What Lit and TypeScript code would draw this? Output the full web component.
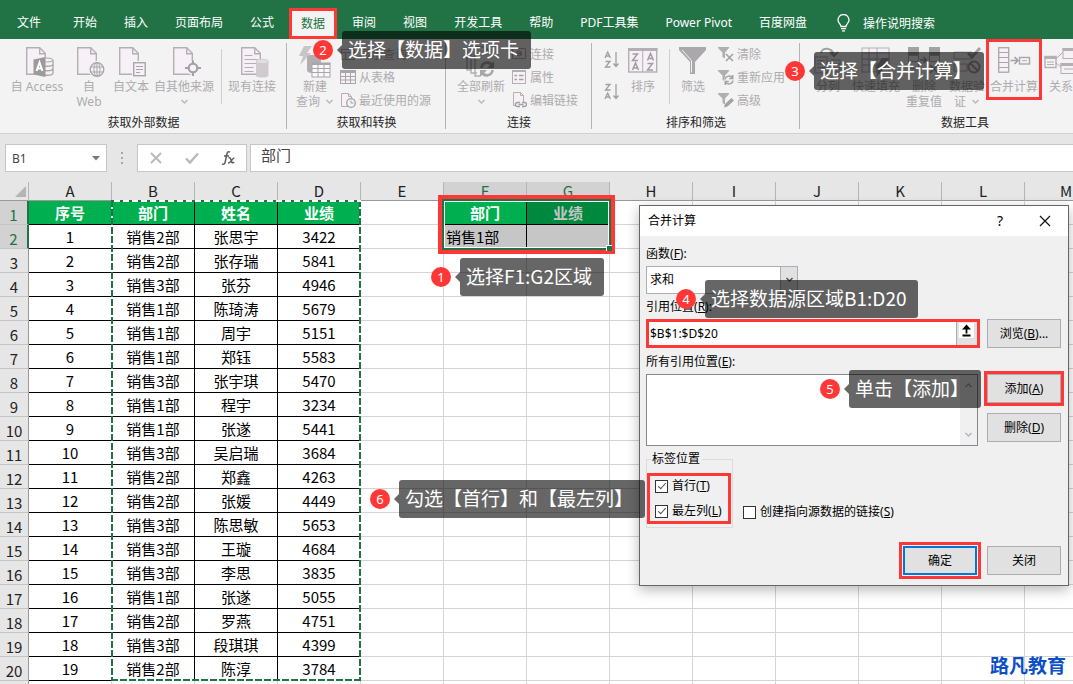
import { LitElement, html, svg, css, nothing, TemplateResult, SVGTemplateResult } from "lit";
import { customElement, property } from "lit/decorators.js";
import { classMap } from "lit/directives/class-map.js";

/* ---------- icons ---------- */

const wrap = (w: number, h: number, body: SVGTemplateResult) =>
  html`<svg width=${w} height=${h} viewBox="0 0 ${w} ${h}" fill="none" stroke="#b3afb3" aria-hidden="true">${body}</svg>`;

const sheet = svg`<path fill="#f7f0f7" stroke-width="1.4" d="M3.7 1.7h13l5.6 5.6v21H3.7z"/><path stroke-width="1.4" d="M16.7 1.7v6h5.6"/>`;
const smallSheet = svg`<path fill="#f7f0f7" d="M1.5 1.5h7l3 3v10h-10z"/><path d="M8.5 1.5v3h3"/>`;
const smallFunnel = svg`<path fill="#b0aeb0" stroke="none" d="M0 1h11v1L7 6.500v6L4.500 11V6.500L0 2z"/>`;

const icons: Record<string, TemplateResult> = {
  access: wrap(34, 32, svg`<g transform="translate(3 0)">${sheet}
    <rect x="17" y="11" width="14" height="20" fill="#f3f3f3" stroke="none"/>
    <path fill="#f7f0f7" stroke="#a8a6a8" stroke-width="1.300" d="M17 14v13c0 3 13 3 13 0V14M17 18c0 3 13 3 13 0M17 22.500c0 3 13 3 13 0"/><ellipse cx="23.500" cy="14" rx="6.500" ry="2" fill="#f7f0f7" stroke="#a8a6a8"/>
    <path fill="#9c9a9c" stroke="none" d="M10.500 13.500l12-2.500v20l-12-2.500z"/><path stroke="#fff" stroke-width="2" d="M13.500 25l3-8.500 3 8.500M14.500 22.500h4"/></g>`),
  web: wrap(34, 32, svg`<g transform="translate(2 0)">${sheet}<circle cx="23" cy="23.500" r="8.500" fill="#f3f3f3" stroke="none"/>
    <circle cx="23" cy="23.500" r="6.800" fill="#f7f0f7" stroke="#a8a6a8" stroke-width="1.300"/><ellipse cx="23" cy="23.500" rx="3" ry="6.800" stroke="#a8a6a8"/><path stroke="#a8a6a8" d="M16.500 21h13M16.500 26h13M23 17v13.500"/></g>`),
  text: wrap(34, 32, svg`<g transform="translate(2 0)">${sheet}<rect x="16" y="15" width="14" height="16" fill="#f3f3f3" stroke="none"/>
    <rect x="17.700" y="16.700" width="11.500" height="13" fill="#f7f0f7" stroke="#a8a6a8" stroke-width="1.400"/><path stroke="#a8a6a8" d="M20 20.500h7M20 23.500h7M20 26.500h4"/></g>`),
  other: wrap(34, 32, svg`<g transform="translate(3 0)">${sheet}<circle cx="23" cy="22" r="7" fill="#f3f3f3" stroke="none"/>
    <circle cx="23" cy="22" r="4.300" fill="#f7f0f7" stroke="#a3a1a3" stroke-width="2.200"/><path stroke="#a3a1a3" stroke-width="2" d="M23 14.500v3.500M23 26v4M15 22h3.500M27 22h4"/></g>`),
  existing: wrap(34, 32, svg`<g transform="translate(3 0)">${sheet}<path d="M6.500 9.500h8M6.500 13.500h13M6.500 17.500h13M6.500 21.500h9M6.500 25.500h9"/>
    <path fill="#cfcbcf" stroke="none" d="M18 15.500v14c0 2.700 12.500 2.700 12.500 0v-14z"/><ellipse cx="24.300" cy="15.500" rx="6.200" ry="2.200" fill="#e2dee2" stroke="#cfcbcf"/></g>`),
  newQuery: wrap(34, 32, svg`<path fill="#c8c4c8" stroke="none" d="M6 0h8l-5 7h4L2 19l3-9H1z"/><path fill="#b0aeb0" stroke="none" d="M9 12c0-2 1-3 3-3h11v9h-9v9c-3 0-5-1-5-3z"/>
    <rect x="14" y="17" width="18" height="14" fill="#fbf7fb" stroke="#a8a6a8"/><path stroke="#a8a6a8" stroke-width="2" d="M14 18h18"/><path stroke="#a8a6a8" d="M14 22.500h18M14 26.500h18M20 18v13M26 18v13"/>`),
  refreshAll: wrap(34, 32, svg`<path stroke-width="1.400" d="M3 2v22h5M7 2v25h6M11 1h10l5 5M11 1v29h5"/><circle cx="23" cy="23" r="7.500" fill="#f3f3f3" stroke="none"/>
    <path stroke="#a8a6a8" stroke-width="2.600" d="M17.500 22c.5-6 8-7 10.500-2.500M28.500 24c-.5 6-8 7-10.500 2.500"/><path fill="#a8a6a8" stroke="none" d="M30 15v7h-7zM16 31v-7h7z"/>`),
  sort: wrap(34, 32, svg`<rect x="2.700" y="3" width="28" height="23" fill="#f7f0f7" stroke-width="1.400"/><path stroke-width="3" d="M2 3.500h29.500"/><path d="M16.700 4v22"/>
    <path stroke="#a09ea0" stroke-width="1.500" d="M6.500 8h5l-5 6.500h5.500M6.500 24l3-7 3 7M7.500 22h4M21.500 14.500l3-7 3 7M22.500 12.500h4M21.500 17.500h5l-5 6.500h5.500"/>`),
  filter: wrap(34, 32, svg`<path fill="#aaa8aa" stroke="none" d="M3 1h27v3L19 16v12h-5V16L3 4z"/><path stroke="#f3f3f3" d="M6 4l9.500 10.500v12"/>`),
  split: wrap(34, 32, svg`<path stroke="#a3a1a3" stroke-width="2" d="M10 7c1-6 11-6 13 2M19 6l4 4 4-4"/><rect x="4" y="11" width="12" height="16" fill="#f7f0f7"/><path d="M6 14.500h8M6 18h8M6 21.500h8M20 14h9v12h-9M20 18h9M20 22h9"/>`),
  fill: wrap(34, 32, svg`<rect x="3" y="2" width="27" height="24" fill="#f7f0f7"/><path d="M3 7h27M3 13h27M3 19h27M10 2v24M18 2v24"/><path fill="#a3a1a3" stroke="none" d="M23 12h8l-6 7h4L17 31l3-9h-4z"/>`),
  dedupe: wrap(34, 32, svg`<path fill="#a3a1a3" stroke="none" d="M1 1h11v8H1zM22 1h11v8H22z"/><path d="M1.500 9.500h10v6h-10zM1.500 15.500h10v7h-10zM22.500 9.500h10v6h-10z"/><path stroke="#a3a1a3" stroke-width="1.600" d="M13 14h6M16.500 11l3 3-3 3M23 19l8 8M31 19l-8 8"/>`),
  validate: wrap(34, 32, svg`<path fill="#f7f0f7" d="M4 6h18v7H4zM4 18h13v7H4z"/><path stroke="#a3a1a3" stroke-width="3" d="M18 7l4 4 8-9"/><circle cx="24" cy="21" r="5.500" stroke="#a3a1a3" stroke-width="2"/><path stroke="#a3a1a3" stroke-width="2" d="M20 17l8 8"/>`),
  consolidate: wrap(34, 32, svg`<rect x="1.700" y="1.700" width="10" height="24.500" fill="#f7f0f7" stroke="#aaa7aa" stroke-width="1.300"/><path stroke="#aaa7aa" d="M1.700 6.500h10M1.700 11.500h10M1.700 16.500h10M1.700 21.500h10"/>
    <path stroke="#a3a1a3" stroke-width="1.600" d="M13.500 14.500h7M17.500 11l3.500 3.500-3.500 3.500"/><rect x="22.500" y="11.500" width="10" height="6.500" fill="#f7f0f7" stroke="#aaa7aa" stroke-width="1.400"/><path d="M25 14.700h5"/>`),
  relation: wrap(34, 32, svg`<path d="M11 14l8-8M11 16l8 7"/><rect x="1" y="10.500" width="11" height="11" fill="#f7f0f7" stroke-width="1.400"/><path stroke-width="3" d="M.5 11.500h12"/><path d="M3 16h7M3 18.500h7"/><rect x="19" y="2.500" width="14" height="10" fill="#f7f0f7"/><path stroke-width="3" d="M18.500 3.500h15"/><rect x="17" y="17.500" width="16" height="10" fill="#f7f0f7"/><path stroke-width="3" d="M16.500 18.500h17"/><path d="M20 23h10"/>`),
  showQuery: wrap(16, 16, svg`<path fill="#f7f0f7" d="M1.500 3.500h13v10h-13z"/><path d="M1.500 6.500h13M5.500 6.500v7"/>`),
  table: wrap(16, 16, svg`<rect x=".5" y="1.500" width="15" height="13" fill="#f7f0f7" stroke="#a8a6a8"/><path stroke="#a8a6a8" stroke-width="3" d="M0 2.500h16"/><path stroke="#a8a6a8" d="M0 7.500h16M0 11h16M5.500 3v12M10.500 3v12"/>`),
  recent: wrap(16, 16, svg`${smallSheet}<circle cx="11" cy="11" r="4.300" fill="#f3f3f3" stroke="#a3a1a3" stroke-width="1.300"/><path stroke="#a3a1a3" d="M11 8.500V11h2.500"/>`),
  connection: wrap(16, 16, svg`<path d="M1.500 2.500h13v10h-13z" fill="#f7f0f7"/><path stroke="#a3a1a3" stroke-width="1.500" d="M5 7.500h6"/><circle cx="8" cy="7.500" r="2.500" stroke="#a3a1a3"/>`),
  props: wrap(16, 16, svg`<rect x="1.500" y="1.500" width="13" height="13" fill="#f7f0f7"/><path stroke-width="2" d="M1 2h14"/><path stroke="#a3a1a3" stroke-width="1.500" d="M3.500 6.500h2.500M3.500 10.500h2.500M8 6.500h4.500M8 10.500h4.500"/>`),
  editLinks: wrap(16, 16, svg`<g transform="translate(1 -1)">${smallSheet}</g><rect x="4" y="10" width="12" height="6" fill="#f3f3f3" stroke="none"/><path stroke="#a3a1a3" stroke-width="1.400" d="M9 10.500H6.500a2 2 0 0 0 0 4H9M11 10.500h2.500a2 2 0 0 1 0 4H11M7.500 12.500h5"/>`),
  clear: wrap(16, 16, svg`${smallFunnel}<path stroke="#a3a1a3" stroke-width="1.600" d="M8 8l7 7M15 8l-7 7"/>`),
  reapply: wrap(16, 16, svg`${smallFunnel}<circle cx="11" cy="11" r="5" fill="#f3f3f3" stroke="none"/><path stroke="#a3a1a3" stroke-width="1.500" d="M7 10.500c.5-4 6-4.500 7.500-1.500M15 11.500c-.5 4-6 4.500-7.500 1.500M14.700 6v3.500h-3.500M7.300 16v-3.500h3.500"/>`),
  advanced: wrap(16, 16, svg`${smallFunnel}<path fill="#a3a1a3" stroke="none" d="M13.500 6l2.500 2.500-6.500 6L6 15.500l1-3.500z"/>`),
  sortAsc: wrap(16, 20, svg`<path stroke="#a09ea0" stroke-width="1.300" d="M1 8l2.700-6 2.700 6M2 6h3.500M1.500 11.500h4.500L1.500 17H6.500M12 2v14M9.500 13.500l2.500 3 2.500-3"/>`),
  sortDesc: wrap(16, 20, svg`<path stroke="#a09ea0" stroke-width="1.300" d="M1.500 2.500H6L1.500 8h5M1 17l2.700-6 2.700 6M2 15h3.500M12 2v14M9.500 13.500l2.500 3 2.500-3"/>`),
};

const chevron = (color: string) =>
  html`<svg width="9" height="6" viewBox="0 0 9 6" fill="none" stroke=${color} stroke-width="1.500" aria-hidden="true"><path d="M1.500 1l3 3 3-3" /></svg>`;

/* ---------- data ---------- */

const tabs = ["文件", "开始", "插入", "页面布局", "公式", "数据", "审阅", "视图", "开发工具", "帮助", "PDF工具集", "Power Pivot", "百度网盘"];

interface Big { icon: string; lines: string[]; width: number; arrow?: boolean; marked?: boolean }
type Item = Big | { small: [string, string][] } | { orders: string[] } | "rule";
interface Group { name: string; title: string; items: Item[] }

const groups: Group[] = [
  { name: "external", title: "获取外部数据", items: [
    { icon: "access", lines: ["自 Access"], width: 66 },
    { icon: "web", lines: ["自", "Web"], width: 38 },
    { icon: "text", lines: ["自文本"], width: 46 },
    { icon: "other", lines: ["自其他来源", ""], width: 60, arrow: true },
    "rule",
    { icon: "existing", lines: ["现有连接"], width: 60 },
  ] },
  { name: "transform", title: "获取和转换", items: [
    { icon: "newQuery", lines: ["新建", "查询"], width: 46, arrow: true },
    { small: [["showQuery", "显示查询"], ["table", "从表格"], ["recent", "最近使用的源"]] },
  ] },
  { name: "connect", title: "连接", items: [
    { icon: "refreshAll", lines: ["全部刷新", ""], width: 56, arrow: true },
    { small: [["connection", "连接"], ["props", "属性"], ["editLinks", "编辑链接"]] },
  ] },
  { name: "filtering", title: "排序和筛选", items: [
    { orders: ["sortAsc", "sortDesc"] },
    { icon: "sort", lines: ["排序"], width: 38 },
    "rule",
    { icon: "filter", lines: ["筛选"], width: 46 },
    { small: [["clear", "清除"], ["reapply", "重新应用"], ["advanced", "高级"]] },
  ] },
  { name: "tools", title: "数据工具", items: [
    { icon: "split", lines: ["分列"], width: 48 },
    { icon: "fill", lines: ["快速填充"], width: 48 },
    { icon: "dedupe", lines: ["删除", "重复值"], width: 48 },
    { icon: "validate", lines: ["数据验", "证"], width: 38, arrow: true },
    { icon: "consolidate", lines: ["合并计算"], width: 56, marked: true },
    { icon: "relation", lines: ["关系"], width: 38 },
  ] },
];

const columns = "ABCDEFGHIJKLM".split("");
const people: [string, string, number][] = [
  ["销售2部", "张思宇", 3422], ["销售2部", "张存瑞", 5841], ["销售3部", "张芬", 4946], ["销售1部", "陈琦涛", 5679],
  ["销售1部", "周宇", 5151], ["销售1部", "郑钰", 5583], ["销售3部", "张宇琪", 5470], ["销售1部", "程宇", 3234],
  ["销售1部", "张遂", 5441], ["销售3部", "吴启瑞", 3684], ["销售2部", "郑鑫", 4263], ["销售2部", "张媛", 4449],
  ["销售3部", "陈思敏", 5653], ["销售3部", "王璇", 4684], ["销售3部", "李思", 3835], ["销售1部", "张遂", 5055],
  ["销售2部", "罗燕", 4751], ["销售3部", "段琪琪", 4399], ["销售2部", "陈淳", 3784],
];
const rows: (string | number)[][] = [
  ["序号", "部门", "姓名", "业绩", "", "部门", "业绩"],
  ...people.map((p, i) => [i + 1, ...p]),
  [],
];
rows[1][4] = "";
rows[1][5] = "销售1部";

const steps = [
  { n: 1, text: "选择F1:G2区域", x: 431, y: 258 },
  { n: 2, text: "选择【数据】选项卡", x: 313, y: 31 },
  { n: 3, text: "选择【合并计算】", x: 785, y: 52 },
  { n: 4, text: "选择数据源区域B1:D20", x: 676, y: 280 },
  { n: 5, text: "单击【添加】", x: 820, y: 370 },
  { n: 6, text: "勾选【首行】和【最左列】", x: 370, y: 480 },
];

/* ---------- ribbon ---------- */

@customElement("xl-ribbon")
class XlRibbon extends LitElement {
  static styles = css`
    :host { display: block; flex: none; }
    button { font: inherit; color: inherit; background: none; border: 0; padding: 0; margin: 0; }
    svg { display: block; flex: none; }
    .tabs { display: flex; align-items: flex-end; gap: 3px; height: 39px; padding-left: 5px; background: #217346; color: #fff; white-space: nowrap; overflow: hidden; }
    .tab { box-sizing: border-box; flex: none; height: 31px; padding: 0 12px 2px; line-height: 16px; }
    .tab:first-child { margin-right: 5px; }
    .active { padding: 0 9px; background: #f3f3f3; color: #217346; border: 3px solid #ff3737; }
    .tell { display: flex; align-items: center; gap: 13px; height: 31px; padding: 0 12px 2px 15px; }
    .groups { display: flex; height: 94px; background: #f3f3f3; border-bottom: 1px solid #d0d0d0; color: #aeabae; overflow: hidden; }
    .group { display: flex; flex-direction: column; flex: none; position: relative; box-sizing: border-box; }
    .group::after { content: ""; position: absolute; right: 0; top: 4px; bottom: 4px; width: 1px; background: #b4b4b4; }
    .items { display: flex; align-items: flex-start; height: 76px; }
    .external .items { padding: 0 5px 0 4px; }
    .transform .items { padding: 0 15px 0 5px; }
    .connect .items { padding: 0 14px 0 7px; }
    .filtering .items { padding: 0 15px 0 12px; }
    .tools .items { padding: 0 50px 0 4px; }
    .title { text-align: center; line-height: 16px; color: #262626; }
    .big { box-sizing: border-box; flex: none; display: flex; flex-direction: column; align-items: center; padding-top: 7px; line-height: 15px; white-space: nowrap; }
    .line { display: flex; align-items: center; justify-content: center; gap: 5px; min-height: 15px; }
    .line:nth-of-type(1) { margin-top: 1px; }
    .marked { border: 3px solid #ff3737; height: 61px; padding-top: 4px; }
    .rule { flex: none; width: 1px; height: 55px; margin: 10px 0 0 7px; background: #cfcfcf; }
    .smalls { padding: 3px 0 0 2px; }
    .small { display: flex; align-items: center; gap: 3px; height: 23px; white-space: nowrap; }
    .orders { display: flex; flex-direction: column; gap: 12px; padding: 11px 4px 0 0; }
  `;

  private item(i: Item) {
    if (i === "rule") return html`<span class="rule"></span>`;
    if ("small" in i)
      return html`<div class="smalls">${i.small.map(([icon, t]) => html`<button class="small">${icons[icon]}<span>${t}</span></button>`)}</div>`;
    if ("orders" in i)
      return html`<div class="orders">${i.orders.map((o) => html`<button aria-label=${o === "sortAsc" ? "升序" : "降序"}>${icons[o]}</button>`)}</div>`;
    return html`<button class=${classMap({ big: true, marked: !!i.marked })} style="width:${i.width}px">
      ${icons[i.icon]}
      ${i.lines.map((l, k) => html`<span class="line">${l}${i.arrow && k === i.lines.length - 1 ? chevron("#bdbabd") : nothing}</span>`)}
    </button>`;
  }

  render() {
    return html`
      <nav class="tabs">
        ${tabs.map((t) => html`<button class=${classMap({ tab: true, active: t === "数据" })}>${t}</button>`)}
        <button class="tell">
          <svg width="13" height="18" viewBox="0 0 13 18" fill="none" stroke="#fff" stroke-width="1.300" aria-hidden="true">
            <path d="M4 12.500c0-2.500-3-3.500-3-6.500a5.500 5.500 0 0 1 11 0c0 3-3 4-3 6.500zM4 14.700h5M5 16.800h3" />
          </svg>
          <span>操作说明搜索</span>
        </button>
      </nav>
      <div class="groups">
        ${groups.map((g) => html`<section class="group ${g.name}"><div class="items">${g.items.map((i) => this.item(i))}</div><div class="title">${g.title}</div></section>`)}
      </div>`;
  }
}

/* ---------- formula bar ---------- */

@customElement("xl-formula-bar")
class XlFormulaBar extends LitElement {
  static styles = css`
    :host { display: flex; flex: none; height: 28px; padding: 10px 0 10px 5px; background: #e6e6e6; color: #444; }
    .box { box-sizing: border-box; display: flex; align-items: center; background: #fff; border: 1px solid #c6c6c6; }
    .name { width: 102px; padding-right: 6px; }
    input { font: inherit; color: inherit; border: 0; outline: 0; background: none; min-width: 0; flex: 1; padding: 0 6px; }
    .dots { width: 30px; display: flex; align-items: center; justify-content: center; }
    .tools { width: 110px; justify-content: space-between; padding: 0 10px; }
    .tools button { border: 0; background: none; padding: 0; display: flex; }
    .formula { flex: 1; margin-left: 3px; border-right: 0; align-items: flex-start; }
    .formula input { font-size: 15px; line-height: 20px; padding: 0 10px; }
  `;
  render() {
    return html`
      <div class="box name">
        <input aria-label="名称框" value="B1" />
        <svg width="8" height="5" viewBox="0 0 8 5" aria-hidden="true"><path fill="#777" d="M0 0h8L4 4.500z" /></svg>
      </div>
      <div class="dots"><svg width="3" height="12" viewBox="0 0 3 12" aria-hidden="true"><path fill="#a8a8a8" d="M0 0h2v2H0zM0 5h2v2H0zM0 10h2v2H0z" /></svg></div>
      <div class="box tools">
        <button aria-label="取消"><svg width="16" height="14" viewBox="0 0 16 14" fill="none" stroke="#b8b8b8" stroke-width="1.800"><path d="M3 2l10 10M13 2L3 12" /></svg></button>
        <button aria-label="输入"><svg width="16" height="14" viewBox="0 0 16 14" fill="none" stroke="#b8b8b8" stroke-width="2.400"><path d="M2 7.500l4 4L14 2.500" /></svg></button>
        <button aria-label="插入函数"><svg width="16" height="16" viewBox="0 0 16 16" fill="none" stroke="#5e5e5e" stroke-width="1.500"><path d="M10 2.200C8.500 1 7.300 2 6.900 4L5.200 12c-.4 2-1.600 2.800-3.200 1.900M4 6h5M8.500 8c2-.8 2 .5 2.700 2.700.6 2.300 1.500 2.600 3 1.500M14.300 8.100C12 8 11 13.400 8 12.900" /></svg></button>
      </div>
      <div class="box formula"><input aria-label="编辑栏" value="部门" /></div>`;
  }
}

/* ---------- worksheet ---------- */

@customElement("xl-sheet")
class XlSheet extends LitElement {
  static styles = css`
    :host { display: block; position: relative; flex: 1; min-height: 0; overflow: hidden; background: #fff; font: 15px "Noto Sans CJK SC", sans-serif; }
    table { table-layout: fixed; width: 1108px; border-collapse: separate; border-spacing: 0; }
    .row-col { width: 29px; }
    th, td { box-sizing: border-box; padding: 0; font-weight: 400; overflow: hidden; white-space: nowrap; border-right: 1px solid #d4d4d4; border-bottom: 1px solid #d4d4d4; text-align: center; line-height: 20px; }
    td { height: 24px; color: #000; }
    thead th { height: 19px; line-height: 18px; background: #e6e6e6; border-right-color: #b5b5b5; border-bottom-color: #999; color: #222; vertical-align: bottom; }
    tbody th { background: #e6e6e6; border-right-color: #999; border-bottom-color: #c4c4c4; color: #222; vertical-align: bottom; line-height: 18px; }
    thead .on, tbody th.on { background: #d2d2d2; color: #217346; }
    tbody th.on { border-right: 2px solid #217346; }
    .data { border-color: #000; }
    .picked { background: #c6c6c6; border-color: #000; }
    .head { background: #00b050; color: #fff; font-weight: 700; }
    .head.dim { background: #00883e; color: #c6c6c6; }
    .left { text-align: left; padding-left: 2px; }
    .corner svg { display: block; margin: 0 2px 3px auto; }
    .ants { position: absolute; left: 111px; top: 18px; width: 250px; height: 481px; pointer-events: none;
      background:
        repeating-linear-gradient(90deg, #217346 0 3px, #fff 3px 9px) top / 100% 2px no-repeat,
        repeating-linear-gradient(90deg, #217346 0 7px, #fff 7px 9px) bottom / 100% 2px no-repeat,
        repeating-linear-gradient(180deg, #217346 0 7px, #fff 7px 9px) left / 2px 100% no-repeat,
        repeating-linear-gradient(180deg, #217346 0 7px, #fff 7px 9px) right / 2px 100% no-repeat; }
    .selection { position: absolute; left: 438px; top: 13px; width: 177px; height: 59px; box-sizing: border-box; border: 4px solid #ff3737; pointer-events: none; }
    .selection::before { content: ""; position: absolute; inset: 0; border: 2px solid #217346; box-shadow: inset 0 0 0 1px #fff; }
    .selection::after { content: ""; position: absolute; right: -1px; bottom: -1px; width: 5px; height: 5px; background: #217346; border: 1px solid #fff; border-width: 1px 0 0 1px; }
  `;

  private cell(r: number, c: number) {
    const inData = c < 4 && r < 20;
    const inPick = (c === 5 || c === 6) && r < 2;
    return html`<td class=${classMap({
      data: inData,
      picked: inPick,
      head: r === 0 && (inData || inPick),
      dim: r === 0 && c === 6,
      left: r === 1 && c === 5,
    })}>${rows[r][c] ?? ""}</td>`;
  }

  render() {
    return html`
      <table>
        <colgroup><col class="row-col" />${columns.map(() => html`<col />`)}</colgroup>
        <thead><tr>
          <th class="corner"><svg width="11" height="11" viewBox="0 0 11 11" aria-hidden="true"><path fill="#b4b4b4" d="M11 0v11H0z" /></svg></th>
          ${columns.map((c) => html`<th class=${classMap({ on: c === "F" || c === "G" })}>${c}</th>`)}
        </tr></thead>
        <tbody>
          ${rows.map((_, r) => html`<tr>
            <th class=${classMap({ on: r < 2 })}>${r < 20 ? r + 1 : nothing}</th>
            ${columns.map((_c, c) => this.cell(r, c))}
          </tr>`)}
        </tbody>
      </table>
      <div class="ants"></div>
      <div class="selection"></div>`;
  }
}

/* ---------- consolidate dialog ---------- */

const key = (text: string, k: string, tail = "") => html`${text}(<u>${k}</u>)${tail}`;

@customElement("xl-dialog")
class XlDialog extends LitElement {
  static styles = css`
    :host { display: block; box-sizing: border-box; width: 430px; background: #f0f0f0; border: 1px solid #666; box-shadow: 0 4px 12px rgba(0, 0, 0, 0.28); color: #000; line-height: 16px; }
    button, input, select { font: inherit; color: inherit; margin: 0; box-sizing: border-box; }
    svg { display: block; }
    .bar { display: flex; align-items: center; height: 30px; padding: 0 17px 0 8px; background: #fff; }
    .bar h1 { flex: 1; margin: 0; font: inherit; }
    .bar button { border: 0; background: none; padding: 0; display: flex; justify-content: center; width: 12px; }
    .bar .help { margin-right: 33px; font-size: 14px; }
    .body { display: grid; grid-template-columns: 1fr 74px; column-gap: 9px; padding: 10px 7px 10px 6px; }
    .wide { grid-column: 1 / -1; }
    .cap { grid-column: 1 / -1; padding-bottom: 4px; }
    .cap.next { padding-top: 5px; }
    .cap.far { padding-top: 6px; }
    .combo { position: relative; width: 152px; height: 28px; }
    .combo select { appearance: none; width: 100%; height: 100%; border: 1px solid #adadb5; background: #fff; border-radius: 0; padding: 0 3px; }
    .combo span { position: absolute; right: 0; top: 0; bottom: 0; width: 18px; box-sizing: border-box; display: flex; align-items: center; justify-content: center; background: #e1e1e1; border: 1px solid #adadb5; pointer-events: none; }
    .btn { height: 29px; border: 1px solid #adadad; background: #e1e1e1; border-radius: 0; padding: 0; }
    .marked { outline: 3px solid #ff3737; }
    .ref { display: flex; box-sizing: border-box; height: 29px; border: 3px solid #ff3737; background: #fff; margin-right: -2px; }
    .ref input { flex: 1; min-width: 0; border: 0; outline: 0; padding: 0 1px; background: none; }
    .ref button { width: 21px; padding: 1px 2px; border: 0; border-left: 1px solid #adadad; background: #e1e1e1; display: flex; }
    .ref svg { background: #fff; }
    .list { display: flex; box-sizing: border-box; height: 72px; border: 1px solid #828790; background: #fff; }
    .list select { flex: 1; min-width: 0; border: 0; outline: 0; background: none; overflow: hidden; padding: 0; }
    .scroll { width: 17px; background: #f0f0f0; display: flex; flex-direction: column; justify-content: space-between; align-items: center; padding: 7px 0; }
    .scroll svg:first-child { transform: rotate(180deg); }
    .side { display: flex; flex-direction: column; gap: 10px; }
    .options { display: flex; align-items: flex-end; gap: 10px; padding-top: 5px; }
    fieldset { margin: 0; box-sizing: border-box; min-width: 0; width: 87px; height: 77px; border: 1px solid #dcdcdc; padding: 6px 1px 0 0; }
    legend { padding: 0 2px 0 1px; margin-left: 4px; }
    .pair { box-sizing: border-box; width: 84px; height: 51px; border: 3px solid #ff3737; display: flex; flex-direction: column; justify-content: space-between; padding: 2px 0 2px 5px; }
    label.tick { display: flex; align-items: center; gap: 4px; white-space: nowrap; height: 16px; }
    .tick input { appearance: none; flex: none; width: 13px; height: 13px; background: #fff; border: 1px solid #333; display: flex; justify-content: center; }
    .tick input:checked::after { content: ""; width: 3px; height: 7px; border: solid #444; border-width: 0 1px 1px 0; transform: rotate(42deg); }
    .lone { padding-bottom: 8px; }
    .foot { grid-column: 1 / -1; display: flex; justify-content: flex-end; gap: 10px; padding-top: 18px; }
    .foot .btn { width: 74px; }
    .ok { border: 2px solid #0078d7; outline: 3px solid #ff3737; outline-offset: 1px; }
  `;

  render() {
    return html`
      <div class="bar">
        <h1>合并计算</h1>
        <button class="help" aria-label="帮助">?</button>
        <button aria-label="关闭窗口"><svg width="12" height="12" viewBox="0 0 12 12" fill="none" stroke="#111" stroke-width="1.200"><path d="M1 1l10 10M11 1L1 11" /></svg></button>
      </div>
      <div class="body">
        <label class="cap" for="fn">${key("函数", "F", ":")}</label>
        <div class="combo wide"><select id="fn"><option>求和</option></select><span>${chevron("#555")}</span></div>
        <label class="cap next" for="ref">${key("引用位置", "R", ":")}</label>
        <div class="ref">
          <input id="ref" value="$B$1:$D$20" />
          <button aria-label="折叠对话框"><svg width="15" height="15" viewBox="0 0 15 15" fill="none" stroke="#000" stroke-width="1.800"><path d="M7.500 10.500V4M3.500 12.500h8" /><path fill="#000" stroke="none" d="M7.500 1.500L12 6.500H3z" /></svg></button>
        </div>
        <button class="btn">${key("浏览", "B", "...")}</button>
        <label class="cap far" for="all">${key("所有引用位置", "E", ":")}</label>
        <div class="list"><select id="all" multiple></select><div class="scroll">${chevron("#a5a5a5")}${chevron("#b5b5b5")}</div></div>
        <div class="side"><button class="btn marked">${key("添加", "A")}</button><button class="btn">${key("删除", "D")}</button></div>
        <div class="options wide">
          <fieldset>
            <legend>标签位置</legend>
            <div class="pair">
              <label class="tick"><input type="checkbox" checked /><span>${key("首行", "T")}</span></label>
              <label class="tick"><input type="checkbox" checked /><span>${key("最左列", "L")}</span></label>
            </div>
          </fieldset>
          <label class="tick lone"><input type="checkbox" /><span>${key("创建指向源数据的链接", "S")}</span></label>
        </div>
        <div class="foot"><button class="btn ok">确定</button><button class="btn">关闭</button></div>
      </div>`;
  }
}

/* ---------- numbered callout ---------- */

@customElement("step-callout")
class StepCallout extends LitElement {
  @property({ type: Number }) n = 0;
  @property() text = "";
  static styles = css`
    :host { display: flex; align-items: center; white-space: nowrap; color: #fff; }
    .dot { width: 20px; height: 20px; border-radius: 50%; background: #ff3737; font-size: 13px; line-height: 20px; text-align: center; margin-right: 4px; }
    .tip { border: 5px solid transparent; border-left: 0; border-right-color: rgba(0, 0, 0, 0.6); }
    .bubble { height: 38px; padding: 0 12px 0 6px; border-radius: 3px; background: rgba(0, 0, 0, 0.6); font: 19px/36px "Noto Sans CJK SC", sans-serif; }
  `;
  render() {
    return html`<span class="dot">${this.n}</span><span class="tip"></span><span class="bubble">${this.text}</span>`;
  }
}

@customElement("app-root")
class AppRoot extends LitElement {
  static styles = css`
    :host { display: flex; flex-direction: column; position: relative; height: 100vh; overflow: hidden; font: 12px "Noto Sans", "Noto Sans CJK SC", sans-serif; }
    .dialog { position: absolute; left: 639px; top: 205px; }
    .step { position: absolute; }
    .mark { position: absolute; right: 7px; bottom: 6px; color: #0b50c4; font: 700 19px/26px "Noto Sans CJK SC", sans-serif; }
  `;
  render() {
    return html`
      <xl-ribbon></xl-ribbon>
      <xl-formula-bar></xl-formula-bar>
      <xl-sheet></xl-sheet>
      <xl-dialog class="dialog" role="dialog" aria-label="合并计算"></xl-dialog>
      <div class="mark">路凡教育</div>
      ${steps.map((s) => html`<step-callout class="step" .n=${s.n} .text=${s.text} style="left:${s.x}px;top:${s.y}px"></step-callout>`)}`;
  }
}
